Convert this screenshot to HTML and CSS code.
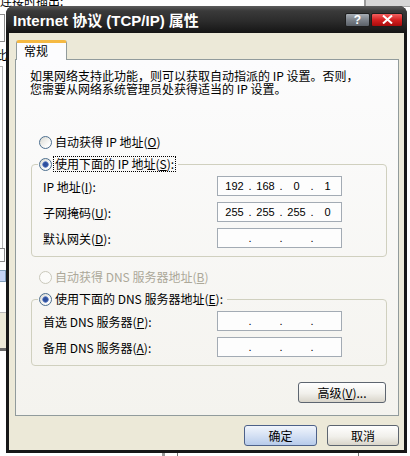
FILE: index.html
```html
<!DOCTYPE html>
<html lang="zh-CN">
<head>
    <meta charset="UTF-8">
    <meta name="viewport" content="width=device-width, initial-scale=1.0">
    <title>Internet 协议 (TCP/IP) 属性</title>
    <link rel="stylesheet" href="styles.css">
</head>
<body>
    <!-- window behind the dialog -->
    <div class="desk">
        <div class="desk-caption">连接时插出:</div>
        <div class="desk-box box-a"></div>
        <div class="desk-char">此</div>
        <div class="desk-box box-b"></div>
        <div class="desk-box box-c"></div>
        <div class="desk-combo"></div>
        <div class="desk-band"></div>
        <div class="desk-corner"></div>
        <div class="desk-mark mark-a"></div>
        <div class="desk-mark mark-b"></div>
        <div class="desk-mark mark-c"></div>
    </div>

    <div class="window">
        <div class="titlebar">
            <span class="title">Internet 协议 (TCP/IP) 属性</span>
            <div class="caption-buttons">
                <span class="cap-btn help">?</span>
                <span class="cap-btn close">
                    <svg width="11" height="9" viewBox="0 0 11 9">
                        <path d="M1 0.5 L10 8.5 M10 0.5 L1 8.5" stroke="#fff" stroke-width="2" fill="none"/>
                    </svg>
                </span>
            </div>
        </div>

        <div class="client">
            <div class="tabs">
                <div class="tab">常规</div>
            </div>

            <div class="tab-page">
                <p class="desc">如果网络支持此功能，则可以获取自动指派的 IP 设置。否则，<br>您需要从网络系统管理员处获得适当的 IP 设置。</p>

                <div class="radio-row auto-ip">
                    <span class="radio"></span>
                    <span class="radio-text">自动获得 IP 地址(<u>O</u>)</span>
                </div>

                <fieldset class="group">
                    <legend>
                        <span class="radio checked"></span>
                        <span class="radio-text focus">使用下面的 IP 地址(<u>S</u>):</span>
                    </legend>
                    <div class="fields">
                        <div class="field">
                            <span class="field-label">IP 地址(<u>I</u>):</span>
                            <div class="ip"><span>192</span><i>.</i><span>168</span><i>.</i><span>0</span><i>.</i><span>1</span></div>
                        </div>
                        <div class="field">
                            <span class="field-label">子网掩码(<u>U</u>):</span>
                            <div class="ip"><span>255</span><i>.</i><span>255</span><i>.</i><span>255</span><i>.</i><span>0</span></div>
                        </div>
                        <div class="field">
                            <span class="field-label">默认网关(<u>D</u>):</span>
                            <div class="ip"><span></span><i>.</i><span></span><i>.</i><span></span><i>.</i><span></span></div>
                        </div>
                    </div>
                </fieldset>

                <div class="radio-row disabled">
                    <span class="radio"></span>
                    <span class="radio-text">自动获得 DNS 服务器地址(<u>B</u>)</span>
                </div>

                <fieldset class="group dns">
                    <legend>
                        <span class="radio checked"></span>
                        <span class="radio-text">使用下面的 DNS 服务器地址(<u>E</u>):</span>
                    </legend>
                    <div class="fields">
                        <div class="field">
                            <span class="field-label">首选 DNS 服务器(<u>P</u>):</span>
                            <div class="ip"><span></span><i>.</i><span></span><i>.</i><span></span><i>.</i><span></span></div>
                        </div>
                        <div class="field">
                            <span class="field-label">备用 DNS 服务器(<u>A</u>):</span>
                            <div class="ip"><span></span><i>.</i><span></span><i>.</i><span></span><i>.</i><span></span></div>
                        </div>
                    </div>
                </fieldset>

                <div class="advanced-row">
                    <button class="btn advanced">高级(<u>V</u>)...</button>
                </div>
            </div>

            <div class="dialog-buttons">
                <button class="btn default ok">确定</button>
                <button class="btn cancel">取消</button>
            </div>
        </div>
    </div>
</body>
</html>
```

FILE: styles.css
```css
* {
    box-sizing: border-box;
}

body {
    margin: 0;
    width: 410px;
    height: 456px;
    overflow: hidden;
    position: relative;
    background: #fff;
    font-family: "Noto Sans CJK SC", sans-serif;
    font-size: 12px;
    color: #000;
}

/* ---------- the window behind ---------- */

.desk-caption {
    position: absolute;
    left: 0;
    top: -7px;
    line-height: 16px;
    font-size: 12px;
}

.desk-box {
    position: absolute;
    border: 1px solid #8c8c8c;
    background: #fff;
}

.box-a {
    left: -20px;
    top: 14px;
    width: 25px;
    height: 28px;
}

.desk-char {
    position: absolute;
    left: -5px;
    top: 48px;
    line-height: 14px;
}

.box-b {
    left: -20px;
    top: 66px;
    width: 23px;
    height: 190px;
    border-color: #b5b5b5;
}

.box-c {
    left: -20px;
    top: 248px;
    width: 25px;
    height: 14px;
}

.desk-combo {
    position: absolute;
    left: -8px;
    top: 270px;
    width: 14px;
    height: 12px;
    border: 1px solid #7f9db9;
    background: #c4d3f5;
}

.desk-band {
    position: absolute;
    left: 0;
    top: 312px;
    width: 7px;
    height: 39px;
    background: #ece9d8;
    border-top: 1px solid #b9b9b9;
    border-bottom: 3px solid #6a6a6a;
}

.desk-corner {
    position: absolute;
    left: 364px;
    top: -2px;
    width: 50px;
    height: 9px;
    background: #d6d6d6;
    border-left: 2px solid #9a9a9a;
    border-bottom: 1px solid #a8a8a8;
}

.desk-mark {
    position: absolute;
    top: 453px;
    height: 3px;
    background: #777;
}

.mark-a {
    left: 162px;
    width: 3px;
    background: #9a9a9a;
}

.mark-b {
    left: 177px;
    width: 1px;
}

.mark-c {
    left: 358px;
    width: 1px;
}

/* ---------- dialog window ---------- */

.window {
    position: absolute;
    left: 6px;
    top: 6px;
    width: 401px;
    height: 447px;
    background: #171717;
    border-radius: 8px 8px 0 0;
    display: flex;
    flex-direction: column;
}

.titlebar {
    height: 27px;
    flex: none;
    display: flex;
    align-items: center;
    justify-content: space-between;
    padding: 0 4px 0 7px;
    border-radius: 8px 8px 0 0;
    background: linear-gradient(#5c5c5c 0, #3a3a3a 18%, #2c2c2c 55%, #151515 100%);
}

.title {
    font-family: "Liberation Sans", "Noto Sans CJK SC", sans-serif;
    font-weight: bold;
    font-size: 15px;
    color: #fff;
    white-space: nowrap;
}

.caption-buttons {
    display: flex;
    gap: 1px;
}

.cap-btn {
    height: 14px;
    display: flex;
    align-items: center;
    justify-content: center;
    border: 1px solid #1e1e1e;
    border-radius: 2px;
    color: #fff;
}

.help {
    width: 25px;
    font-family: "Liberation Sans", sans-serif;
    font-weight: bold;
    font-size: 12px;
    background: linear-gradient(#a7adb4, #7b8189 50%, #5b6168);
}

.close {
    width: 32px;
    background: linear-gradient(#f26060, #d42020 50%, #a80c0c);
}

.client {
    flex: 1;
    margin: 0 3px 3px;
    background: #ece9d8;
    padding: 7px 5px 0 6px;
}

/* ---------- tab ---------- */

.tabs {
    display: flex;
    padding-left: 1px;
}

.tab {
    position: relative;
    z-index: 1;
    width: 51px;
    height: 20px;
    margin-bottom: -1px;
    border: 1px solid #919b9c;
    border-bottom: none;
    border-top: 3px solid #f5b943;
    border-radius: 3px 3px 0 0;
    background: #fcfcfe;
    padding-left: 7px;
    line-height: 16px;
}

.tab-page {
    height: 357px;
    border: 1px solid #919b9c;
    background: linear-gradient(#fcfcfd, #f4f3ee);
    padding: 9px 11px 0 14px;
}

.desc {
    margin: 0;
    line-height: 13px;
    white-space: nowrap;
}

/* ---------- radios ---------- */

.radio-row {
    display: flex;
    align-items: center;
    height: 16px;
    padding-left: 9px;
}

.auto-ip {
    margin-top: 39px;
}

.radio {
    width: 13px;
    height: 13px;
    flex: none;
    border-radius: 50%;
    border: 1px solid #4c6e8e;
    background: linear-gradient(135deg, #d9d9d2, #fbfbfa 70%);
    margin-right: 3px;
}

.radio.checked {
    background:
        radial-gradient(circle, #2d4f9e 0 2px, #7d96cf 3px, transparent 3.5px),
        linear-gradient(135deg, #d9d9d2, #fbfbfa 70%);
}

.radio-text {
    line-height: 14px;
    white-space: nowrap;
}

.disabled {
    margin-top: 12px;
    color: #aca899;
}

.disabled .radio {
    border-color: #cac8bb;
    background: #fbfbf9;
}

/* ---------- group boxes ---------- */

.group {
    margin: 6px 0 0 1px;
    padding: 0;
    min-width: 0;
    border: 1px solid #d0d0bf;
    border-radius: 4px;
}

.group legend {
    display: flex;
    align-items: center;
    height: 16px;
    margin-left: 6px;
    padding: 0 2px 0 1px;
}

.group legend .radio {
    margin-right: 1px;
}

.group legend .radio-text {
    padding: 0 1px;
    border: 1px solid transparent;
}

.group legend .focus {
    border: 1px dotted #000;
}

.fields {
    display: flex;
    flex-direction: column;
    gap: 6px;
    padding: 4px 0 8px 11px;
}

.field {
    display: flex;
    align-items: center;
    height: 20px;
}

.field-label {
    width: 174px;
    white-space: nowrap;
}

.ip {
    width: 125px;
    height: 20px;
    display: flex;
    align-items: center;
    padding-left: 3px;
    border: 1px solid #a3abb4;
    background: #fdfdfd;
    font-family: "Liberation Sans", sans-serif;
    font-size: 11px;
}

.ip span {
    flex: 1;
    text-align: center;
}

.ip i {
    width: 4px;
    font-style: normal;
    text-align: center;
}

.dns {
    margin-top: 6px;
}

/* ---------- buttons ---------- */

.btn {
    height: 21px;
    padding: 0;
    font-family: "Noto Sans CJK SC", sans-serif;
    font-size: 12px;
    color: #000;
    border: 1px solid #5d6570;
    border-radius: 3px;
    background: linear-gradient(#ffffff, #f1f0eb 55%, #d9d5ca);
}

.advanced-row {
    display: flex;
    justify-content: flex-end;
    margin-top: 16px;
    padding-right: 1px;
}

.advanced {
    width: 88px;
}

.dialog-buttons {
    display: flex;
    justify-content: flex-end;
    gap: 10px;
    margin-top: 9px;
}

.ok {
    width: 73px;
}

.cancel {
    width: 72px;
}

.default {
    border-color: #4d6189;
    background: linear-gradient(#f1f5fc, #d5e1f4 50%, #b7cbea);
}
```
